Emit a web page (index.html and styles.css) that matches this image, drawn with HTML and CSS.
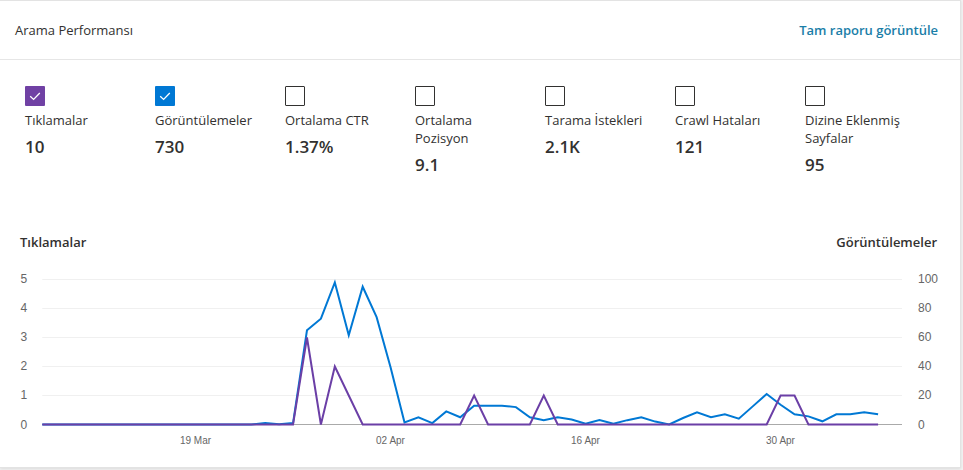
FILE: index.html
```html
<!DOCTYPE html>
<html lang="tr">
<head>
<meta charset="utf-8">
<title>Arama Performansı</title>
<link rel="stylesheet" href="styles.css">
</head>
<body>
<section class="card">
  <header class="card-header">
    <h2 class="card-title">Arama Performansı</h2>
    <a class="report-link" href="#">Tam raporu görüntüle</a>
  </header>

  <div class="metrics">
    <div class="metric">
      <span class="check check-purple"><svg viewBox="0 0 20 20" width="20" height="20"><path d="M5.2 10.2 L8.6 13.4 L14.8 7" fill="none" stroke="#fff" stroke-width="1.3"/></svg></span>
      <div class="metric-label">Tıklamalar</div>
      <div class="metric-value">10</div>
    </div>
    <div class="metric">
      <span class="check check-blue"><svg viewBox="0 0 20 20" width="20" height="20"><path d="M5.2 10.2 L8.6 13.4 L14.8 7" fill="none" stroke="#fff" stroke-width="1.3"/></svg></span>
      <div class="metric-label">Görüntülemeler</div>
      <div class="metric-value">730</div>
    </div>
    <div class="metric">
      <span class="check"></span>
      <div class="metric-label">Ortalama CTR</div>
      <div class="metric-value">1.37%</div>
    </div>
    <div class="metric">
      <span class="check"></span>
      <div class="metric-label">Ortalama Pozisyon</div>
      <div class="metric-value">9.1</div>
    </div>
    <div class="metric">
      <span class="check"></span>
      <div class="metric-label">Tarama İstekleri</div>
      <div class="metric-value">2.1K</div>
    </div>
    <div class="metric">
      <span class="check"></span>
      <div class="metric-label">Crawl Hataları</div>
      <div class="metric-value">121</div>
    </div>
    <div class="metric">
      <span class="check"></span>
      <div class="metric-label">Dizine Eklenmiş Sayfalar</div>
      <div class="metric-value">95</div>
    </div>
  </div>

  <div class="chart">
    <div class="chart-titles">
      <span class="axis-title">Tıklamalar</span>
      <span class="axis-title">Görüntülemeler</span>
    </div>
    <svg class="chart-svg" width="960" height="211" viewBox="0 251 960 211">
      <g class="grid">
        <line x1="42.3" x2="902" y1="279.5" y2="279.5"/>
        <line x1="42.3" x2="902" y1="308.5" y2="308.5"/>
        <line x1="42.3" x2="902" y1="337.5" y2="337.5"/>
        <line x1="42.3" x2="902" y1="366.5" y2="366.5"/>
        <line x1="42.3" x2="902" y1="395.5" y2="395.5"/>
      </g>
      <line class="baseline" x1="42.3" x2="902" y1="424.5" y2="424.5"/>

      <g class="y-left">
        <text x="20.5" y="283.3">5</text>
        <text x="20.5" y="312.3">4</text>
        <text x="20.5" y="341.3">3</text>
        <text x="20.5" y="370.3">2</text>
        <text x="20.5" y="399.3">1</text>
        <text x="20.5" y="428.6">0</text>
      </g>
      <g class="y-right">
        <text x="918" y="283.3">100</text>
        <text x="918" y="312.3">80</text>
        <text x="918" y="341.3">60</text>
        <text x="918" y="370.3">40</text>
        <text x="918" y="399.3">20</text>
        <text x="918" y="428.6">0</text>
      </g>
      <g class="x-labels">
        <text x="195.5" y="443.6">19 Mar</text>
        <text x="390.5" y="443.6">02 Apr</text>
        <text x="585.5" y="443.6">16 Apr</text>
        <text x="780.5" y="443.6">30 Apr</text>
      </g>

      <g transform="translate(42.3 424.5) scale(13.93 -1.45)">
        <polyline class="line line-blue" points="0,0 15,0 16,1.1 17,0.2 18,1 19,65 20,73 21,98 22,61.5 23,95 24,74 25,39.5 26,1.5 27,5 28,1 29,9 30,5 31,13 32,13 33,13 34,12 35,5 36,3 37,5 38,3.5 39,0.5 40,3 41,0.5 42,3 43,5 44,2 45,0 46,4.5 47,8.4 48,5 49,7 50,4 51,12.5 52,21 53,13.6 54,7 55,5.6 56,2.2 57,7 58,7 59,8.4 60,7"/>
      </g>
      <g transform="translate(42.3 424.5) scale(13.93 -29)">
        <polyline class="line line-purple" points="0,0 18,0 19,3 20,0 21,2 22,1 23,0 30,0 31,1 32,0 35,0 36,1 37,0 52,0 53,1 54,1 55,0 60,0"/>
      </g>
    </svg>
  </div>
</section>
</body>
</html>
```

FILE: styles.css
```css
html, body {
  margin: 0;
  padding: 0;
}

body {
  background: #f3f3f3;
  font-family: "Open Sans", "Noto Sans", sans-serif;
  color: #323130;
  width: 963px;
  height: 470px;
  overflow: hidden;
}

.card {
  box-sizing: border-box;
  width: 961px;
  height: 468px;
  background: #fff;
  border: 1px solid #e3e3e3;
  border-left: none;
  box-shadow: 0 1px 3px rgba(0, 0, 0, 0.10);
  display: flex;
  flex-direction: column;
}

.card-header {
  height: 58px;
  border-bottom: 1px solid #e6e6e6;
  display: flex;
  align-items: center;
  justify-content: space-between;
  padding: 0 22px 0 15px;
}

.card-title {
  margin: 0;
  font-size: 13px;
  font-weight: 400;
  line-height: 18px;
  color: #323130;
}

.report-link {
  font-size: 13px;
  font-weight: 600;
  line-height: 18px;
  color: #1a7ea8;
  text-decoration: none;
}

.metrics {
  display: grid;
  grid-template-columns: repeat(7, 130px);
  padding: 26px 0 0 25px;
  align-items: start;
}

.metric {
  display: flex;
  flex-direction: column;
  align-items: flex-start;
}

.check {
  box-sizing: border-box;
  width: 20px;
  height: 20px;
  border: 1px solid #323130;
  border-radius: 1px;
  background: #fff;
  display: block;
}

.check svg {
  display: block;
}

.check-purple {
  background: #7041a4;
  border: none;
}

.check-blue {
  background: #0078d4;
  border: none;
}

.metric-label {
  margin-top: 5px;
  max-width: 105px;
  font-size: 13px;
  line-height: 18px;
  color: #323130;
}

.metric-value {
  margin-top: 6px;
  font-size: 17px;
  font-weight: 600;
  line-height: 24px;
  color: #323130;
}

.chart {
  padding-top: 56px;
  display: flex;
  flex-direction: column;
}

.chart-titles {
  display: flex;
  justify-content: space-between;
  padding: 0 23px 0 20px;
  height: 18px;
}

.axis-title {
  font-size: 13px;
  font-weight: 600;
  line-height: 18px;
  color: #323130;
}

.chart-svg {
  display: block;
}

.grid line {
  stroke: #f0f0f0;
  stroke-width: 1;
}

.baseline {
  stroke: #aaaaaa;
  stroke-width: 1;
}

.y-left text,
.y-right text {
  font-family: "Liberation Sans", Arial, sans-serif;
  font-size: 12px;
  fill: #666666;
}

.x-labels text {
  font-family: "Liberation Sans", Arial, sans-serif;
  font-size: 10px;
  fill: #666666;
  text-anchor: middle;
}

.line {
  fill: none;
  stroke-width: 2;
  vector-effect: non-scaling-stroke;
  stroke-linejoin: miter;
}

.line-blue {
  stroke: #0078d4;
}

.line-purple {
  stroke: #6b3fa6;
}
```
